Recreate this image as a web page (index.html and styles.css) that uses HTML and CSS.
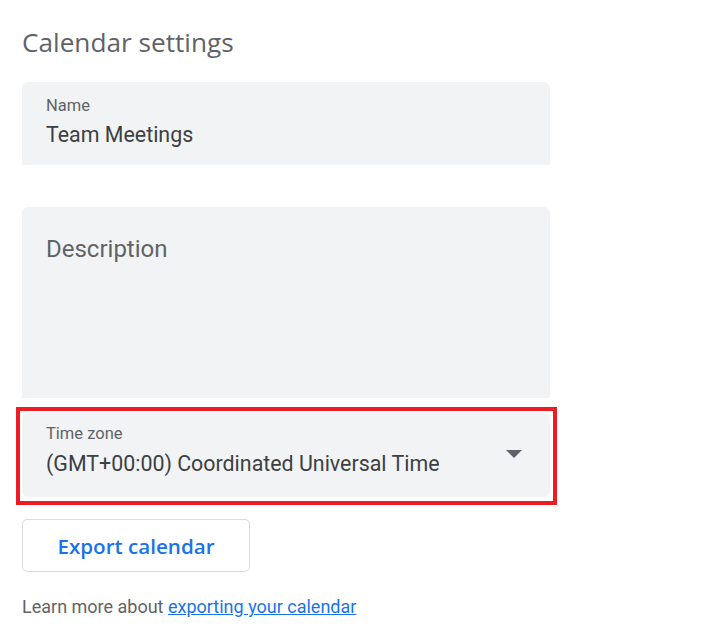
FILE: index.html
```html
<!DOCTYPE html>
<html lang="en">
<head>
    <meta charset="UTF-8">
    <meta name="viewport" content="width=device-width, initial-scale=1.0">
    <title>Calendar settings</title>
    <link rel="stylesheet" href="styles.css">
</head>
<body>
    <div class="page">
        <h1>Calendar settings</h1>

        <div class="field name-field">
            <label class="field-label" for="cal-name">Name</label>
            <div class="field-value" id="cal-name">Team Meetings</div>
        </div>

        <div class="field desc-field">
            <div class="placeholder">Description</div>
        </div>

        <div class="field tz-field">
            <div class="tz-text">
                <div class="field-label">Time zone</div>
                <div class="field-value">(GMT+00:00) Coordinated Universal Time</div>
            </div>
            <span class="arrow"></span>
            <div class="highlight"></div>
        </div>

        <button class="export-btn" type="button">Export calendar</button>

        <p class="learn-more">Learn more about <a href="#">exporting your calendar</a></p>
    </div>
</body>
</html>
```

FILE: styles.css
```css
body {
    margin: 0;
    background: #fff;
    font-family: Roboto, Arial, sans-serif;
}
.page {
    padding: 22px 0 0 22px;
    width: 528px;
}
h1 {
    margin: 0 0 20px;
    font-family: "Open Sans", Roboto, sans-serif;
    font-weight: 400;
    font-size: 26.2px;
    line-height: 40px;
    color: #5f6368;
}
.field {
    background: #f1f3f4;
    border-radius: 6px 6px 0 0;
    box-sizing: border-box;
}
.field-label {
    display: block;
    font-size: 16.5px;
    line-height: 20px;
    color: #5f6368;
}
.field-value {
    font-size: 21.4px;
    line-height: 30px;
    color: #3c4043;
}
.name-field {
    height: 83px;
    padding: 14px 24px 0;
}
.name-field .field-value {
    margin-top: 4px;
}
.desc-field {
    height: 191px;
    margin-top: 42px;
    padding: 26px 24px 0;
}
.placeholder {
    font-size: 24px;
    line-height: 32px;
    color: #5f6368;
}
.tz-field {
    position: relative;
    display: flex;
    align-items: flex-start;
    height: 84px;
    margin-top: 15px;
    padding: 11px 28px 0 24px;
    border-radius: 6px;
}
.tz-field .field-value {
    margin-top: 5px;
}
.tz-text {
    flex: 1;
}
.arrow {
    align-self: center;
    width: 0;
    height: 0;
    border-left: 8px solid transparent;
    border-right: 8px solid transparent;
    border-top: 8px solid #5f6368;
    margin-top: -14px;
}
.highlight {
    position: absolute;
    left: -6px;
    top: -6px;
    right: -7px;
    bottom: -8px;
    border: 4px solid #ed1c24;
    pointer-events: none;
}
.export-btn {
    display: block;
    margin-top: 22px;
    width: 228px;
    height: 53px;
    background: #fff;
    border: 1px solid #dadce0;
    border-radius: 5px;
    font-family: "Open Sans", Roboto, sans-serif;
    font-weight: 600;
    font-size: 20.6px;
    color: #1a73e8;
    cursor: pointer;
}
.learn-more {
    margin: 24px 0 0;
    font-size: 18px;
    line-height: 22px;
    color: #5f6368;
}
.learn-more a {
    color: #1a73e8;
}
```
